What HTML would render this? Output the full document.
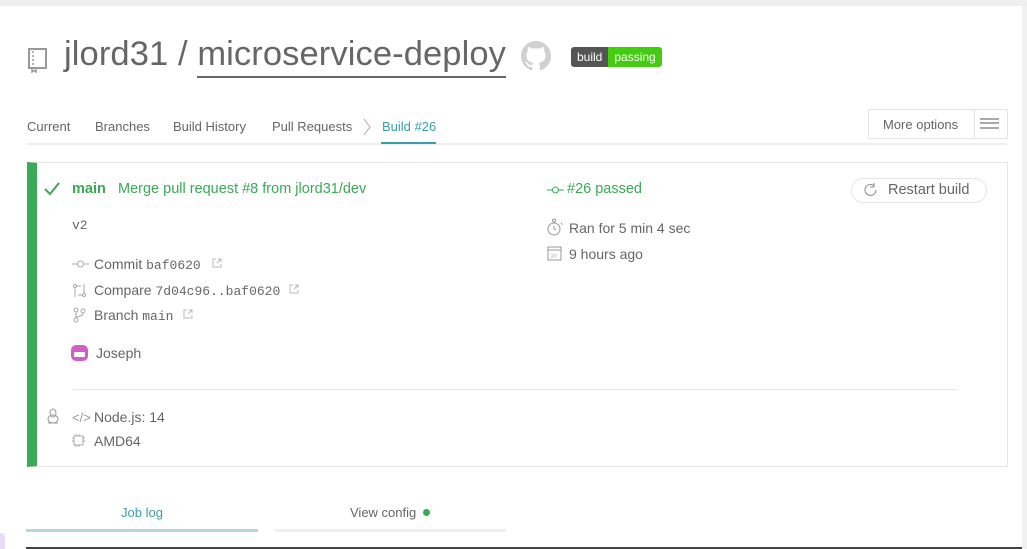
<!DOCTYPE html>
<html><head><meta charset="utf-8"><style>
*{margin:0;padding:0;box-sizing:border-box}
body{width:1027px;height:549px;overflow:hidden;background:#fff;font-family:"Liberation Sans",sans-serif;color:#666;position:relative}
.topband{position:absolute;left:0;top:0;width:1027px;height:6px;background:#efefef}
.sb{position:absolute;right:0;top:6px;width:5px;height:543px;background:#f1f1f1}
.abs{position:absolute;white-space:nowrap}
.mono{font-family:"Liberation Mono",monospace;font-size:13px}
.g{color:#39aa56}
</style></head><body>
<div class="topband"></div><div class="sb"></div>
<svg class="abs" style="left:27px;top:47px" width="22" height="26" viewBox="0 0 22 26"><rect x="2" y="2" width="17" height="19" fill="none" stroke="#999" stroke-width="2"/><line x1="6" y1="4" x2="6" y2="19" stroke="#999" stroke-width="1.5" stroke-dasharray="2 2"/><path d="M5 21v4l2-1.5 2 1.5v-4" fill="none" stroke="#999" stroke-width="1.5"/></svg>
<div class="abs" style="left:64px;top:35px;font-size:34.5px;color:#666;letter-spacing:0.1px">jlord31 / <span style="border-bottom:2px solid #666;padding-bottom:3px">microservice-deploy</span></div>
<svg class="abs" style="left:521px;top:41px;opacity:0.45" width="30" height="30" viewBox="0 0 16 16"><path fill="#999" d="M8 0C3.58 0 0 3.58 0 8c0 3.54 2.29 6.53 5.47 7.59.4.07.55-.17.55-.38 0-.19-.01-.82-.01-1.49-2.01.37-2.53-.49-2.69-.94-.09-.23-.48-.94-.82-1.13-.28-.15-.68-.52-.01-.53.63-.01 1.08.58 1.23.82.72 1.21 1.87.87 2.33.66.07-.52.28-.87.51-1.07-1.78-.2-3.64-.89-3.64-3.95 0-.87.31-1.59.82-2.15-.08-.2-.36-1.02.08-2.12 0 0 .67-.21 2.2.82.64-.18 1.32-.27 2-.27.68 0 1.36.09 2 .27 1.53-1.04 2.2-.82 2.2-.82.44 1.1.16 1.92.08 2.12.51.56.82 1.27.82 2.15 0 3.07-1.87 3.75-3.65 3.95.29.25.54.73.54 1.48 0 1.07-.01 1.93-.01 2.2 0 .21.15.46.55.38A8.013 8.013 0 0016 8c0-4.42-3.58-8-8-8z"/></svg>
<div class="abs" style="left:571px;top:47px;height:20px;font-size:12px;line-height:20px;border-radius:3px;overflow:hidden;display:flex"><span style="background:#555;color:#fff;padding:0 6px">build</span><span style="background:#4c1;color:#fff;padding:0 6px">passing</span></div>
<div class="abs" style="left:27px;top:119px;font-size:13px">Current</div>
<div class="abs" style="left:95px;top:119px;font-size:13px">Branches</div>
<div class="abs" style="left:173px;top:119px;font-size:13px">Build History</div>
<div class="abs" style="left:272px;top:119px;font-size:13px">Pull Requests</div>
<svg class="abs" style="left:362px;top:117px" width="10" height="20"><path d="M2 2l6 8-6 8" fill="none" stroke="#aaa" stroke-width="1"/></svg>
<div class="abs" style="left:382px;top:119px;font-size:13px;color:#3a9fa8">Build #26</div>
<div class="abs" style="left:27px;top:143px;width:980px;height:2px;background:#eee"></div>
<div class="abs" style="left:381px;top:142px;width:55px;height:2px;background:#3a9fa8"></div>
<div class="abs" style="left:868px;top:109px;width:140px;height:30px;border:1px solid #e3e3e3;border-radius:2px"></div>
<div class="abs" style="left:974px;top:110px;width:1px;height:28px;background:#e3e3e3"></div>
<div class="abs" style="left:883px;top:117px;font-size:13px">More options</div>
<div class="abs" style="left:980px;top:118px;width:19px;height:11px;border-top:2px solid #aaa;border-bottom:2px solid #aaa"></div>
<div class="abs" style="left:980px;top:122px;width:19px;height:2px;background:#aaa"></div>
<div class="abs" style="left:27px;top:162px;width:981px;height:305px;border:1px solid #e6e6e6;border-left:10px solid #39aa56"></div>
<svg class="abs" style="left:43px;top:181px" width="18" height="16"><path d="M2 8l5 5 9-11" fill="none" stroke="#39aa56" stroke-width="2"/></svg>
<div class="abs g" style="left:72px;top:181px;font-size:14.5px;font-weight:bold">main</div>
<div class="abs g" style="left:118px;top:181px;font-size:14.5px">Merge pull request #8 from jlord31/dev</div>
<div class="abs mono" style="left:72px;top:218px;color:#666">v2</div>
<svg class="abs" style="left:72px;top:258px" width="17" height="12"><line x1="0" y1="6" x2="17" y2="6" stroke="#aaa"/><circle cx="8.5" cy="6" r="3" fill="#fff" stroke="#aaa"/></svg>
<div class="abs" style="left:94px;top:256px;font-size:14px">Commit <span class="mono">baf0620</span></div>
<svg class="abs" style="left:212px;top:258px" width="10" height="10"><path d="M4 1H1v8h8V6M5 5l4-4M6 1h3v3" fill="none" stroke="#bbb"/></svg>
<svg class="abs" style="left:72px;top:283px" width="15" height="15"><circle cx="3" cy="3" r="1.5" fill="none" stroke="#aaa"/><circle cx="12" cy="12" r="1.5" fill="none" stroke="#aaa"/><path d="M3 5v9M12 1v9M5 3h4M6 12h4" fill="none" stroke="#aaa"/></svg>
<div class="abs" style="left:94px;top:282px;font-size:14px">Compare <span class="mono">7d04c96..baf0620</span></div>
<svg class="abs" style="left:289px;top:284px" width="10" height="10"><path d="M4 1H1v8h8V6M5 5l4-4M6 1h3v3" fill="none" stroke="#bbb"/></svg>
<svg class="abs" style="left:72px;top:307px" width="14" height="16"><circle cx="4" cy="3" r="2" fill="none" stroke="#aaa"/><circle cx="4" cy="13" r="2" fill="none" stroke="#aaa"/><circle cx="11" cy="4" r="2" fill="none" stroke="#aaa"/><path d="M4 5v6M11 6c0 4-7 3-7 5" fill="none" stroke="#aaa"/></svg>
<div class="abs" style="left:94px;top:307px;font-size:14px">Branch <span class="mono">main</span></div>
<svg class="abs" style="left:183px;top:309px" width="10" height="10"><path d="M4 1H1v8h8V6M5 5l4-4M6 1h3v3" fill="none" stroke="#bbb"/></svg>
<div class="abs" style="left:71px;top:345px;width:17px;height:16px;border-radius:5px;background:#d35fc5"><div style="position:absolute;left:3px;top:7px;width:11px;height:5px;background:#fff;border-radius:1px"></div></div>
<div class="abs" style="left:96px;top:345px;font-size:14px">Joseph</div>
<div class="abs" style="left:73px;top:389px;width:884px;height:1px;background:#e6e6e6"></div>
<svg class="abs" style="left:46px;top:408px" width="14" height="17"><ellipse cx="7" cy="5" rx="3" ry="4" fill="none" stroke="#999"/><ellipse cx="7" cy="11" rx="5" ry="4" fill="none" stroke="#999"/><path d="M2 15h4M8 15h4" stroke="#999"/></svg>
<div class="abs" style="left:72px;top:410px;font-size:13px;color:#999">&lt;/&gt;</div>
<div class="abs" style="left:94px;top:409px;font-size:14px">Node.js: 14</div>
<svg class="abs" style="left:72px;top:434px" width="13" height="13"><rect x="2" y="2" width="9" height="9" fill="none" stroke="#aaa"/><path d="M4 0v2M7 0v2M4 11v2M7 11v2M0 4h2M0 7h2M11 4h2M11 7h2" stroke="#aaa"/></svg>
<div class="abs" style="left:94px;top:433px;font-size:14px">AMD64</div>
<svg class="abs" style="left:547px;top:184px" width="17" height="12"><line x1="0" y1="6" x2="17" y2="6" stroke="#39aa56"/><circle cx="8.5" cy="6" r="3" fill="#fff" stroke="#39aa56"/></svg>
<div class="abs g" style="left:567px;top:181px;font-size:14.5px">#26 passed</div>
<svg class="abs" style="left:547px;top:218px" width="17" height="19"><circle cx="7" cy="11" r="6" fill="none" stroke="#999"/><circle cx="7" cy="2.5" r="1.5" fill="none" stroke="#999"/><path d="M7 8v3l2 1M14 5l1.5 1.5" fill="none" stroke="#999"/></svg>
<div class="abs" style="left:569px;top:220px;font-size:14px">Ran for 5 min 4 sec</div>
<svg class="abs" style="left:547px;top:246px" width="15" height="15"><rect x="1" y="1" width="13" height="13" fill="none" stroke="#999"/><line x1="1" y1="4" x2="14" y2="4" stroke="#999"/><text x="4" y="12" font-size="5" fill="#999" font-family="Liberation Sans">27</text></svg>
<div class="abs" style="left:569px;top:246px;font-size:14px">9 hours ago</div>
<div class="abs" style="left:851px;top:178px;width:136px;height:25px;border:1px solid #e6e6e6;border-radius:13px"></div>
<svg class="abs" style="left:863px;top:182px" width="16" height="16"><path d="M13 8a5.5 5.5 0 1 1-2-4.3M11 1v4h-4" fill="none" stroke="#888"/></svg>
<div class="abs" style="left:888px;top:182px;font-size:14.5px">Restart build</div>
<div class="abs" style="left:121px;top:505px;font-size:13px;color:#3a9fa8">Job log</div>
<div class="abs" style="left:26px;top:529px;width:232px;height:3px;background:#b5d8da"></div>
<div class="abs" style="left:350px;top:505px;font-size:13px;color:#666">View config</div>
<div class="abs" style="left:423px;top:509px;width:7px;height:7px;border-radius:50%;background:#39aa56"></div>
<div class="abs" style="left:275px;top:529px;width:231px;height:3px;background:#eee"></div>
<div class="abs" style="left:26px;top:547px;width:996px;height:2px;background:#444"></div>
<div class="abs" style="left:0;top:533px;width:5px;height:16px;background:#eadcf8;border-radius:0 3px 0 0"></div>
</body></html>
